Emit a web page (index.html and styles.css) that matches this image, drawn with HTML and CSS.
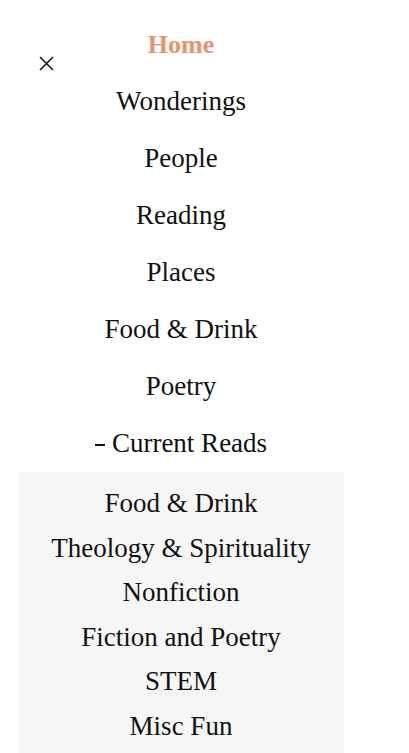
FILE: index.html
```html
<!DOCTYPE html>
<html lang="en">
<head>
<meta charset="utf-8">
<title>Menu</title>
<link rel="stylesheet" href="styles.css">
</head>
<body>
<nav class="menu">
  <button class="close" aria-label="Close">
    <svg width="15" height="15" viewBox="0 0 15 15"><path d="M1 1 L14 14 M14 1 L1 14" stroke="#111" stroke-width="1.5" fill="none"/></svg>
  </button>
  <ul class="main">
    <li class="active">Home</li>
    <li>Wonderings</li>
    <li>People</li>
    <li>Reading</li>
    <li>Places</li>
    <li>Food &amp; Drink</li>
    <li>Poetry</li>
    <li class="folder"><span class="dash"></span>Current Reads</li>
  </ul>
  <ul class="sub">
    <li>Food &amp; Drink</li>
    <li>Theology &amp; Spirituality</li>
    <li>Nonfiction</li>
    <li>Fiction and Poetry</li>
    <li>STEM</li>
    <li>Misc Fun</li>
  </ul>
</nav>
</body>
</html>
```
FILE: styles.css
```css
html, body {
  margin: 0;
  padding: 0;
  background: #fff;
}
body {
  font-family: "Liberation Serif", "Times New Roman", serif;
  color: #111;
}
.menu {
  position: relative;
  width: 326px;
  margin-left: 18px;
  padding-top: 16px;
}
.close {
  position: absolute;
  left: 21px;
  top: 56px;
  width: 15px;
  height: 15px;
  padding: 0;
  border: 0;
  background: none;
  display: block;
}
.close svg { display: block; }
ul {
  list-style: none;
  margin: 0;
  padding: 0;
}
.main li {
  font-size: 27px;
  line-height: 57px;
  text-align: center;
}
.main li.active {
  color: #e8936b;
  font-weight: bold;
  font-size: 26px;
}
.dash {
  display: inline-block;
  width: 10px;
  height: 2.5px;
  background: #111;
  vertical-align: middle;
  margin-right: 7px;
  position: relative;
  top: -1px;
}
.sub {
  background: #f6f6f6;
  padding-top: 9px;
  padding-bottom: 20px;
}
.sub li {
  font-size: 27px;
  line-height: 44.6px;
  text-align: center;
}
```
